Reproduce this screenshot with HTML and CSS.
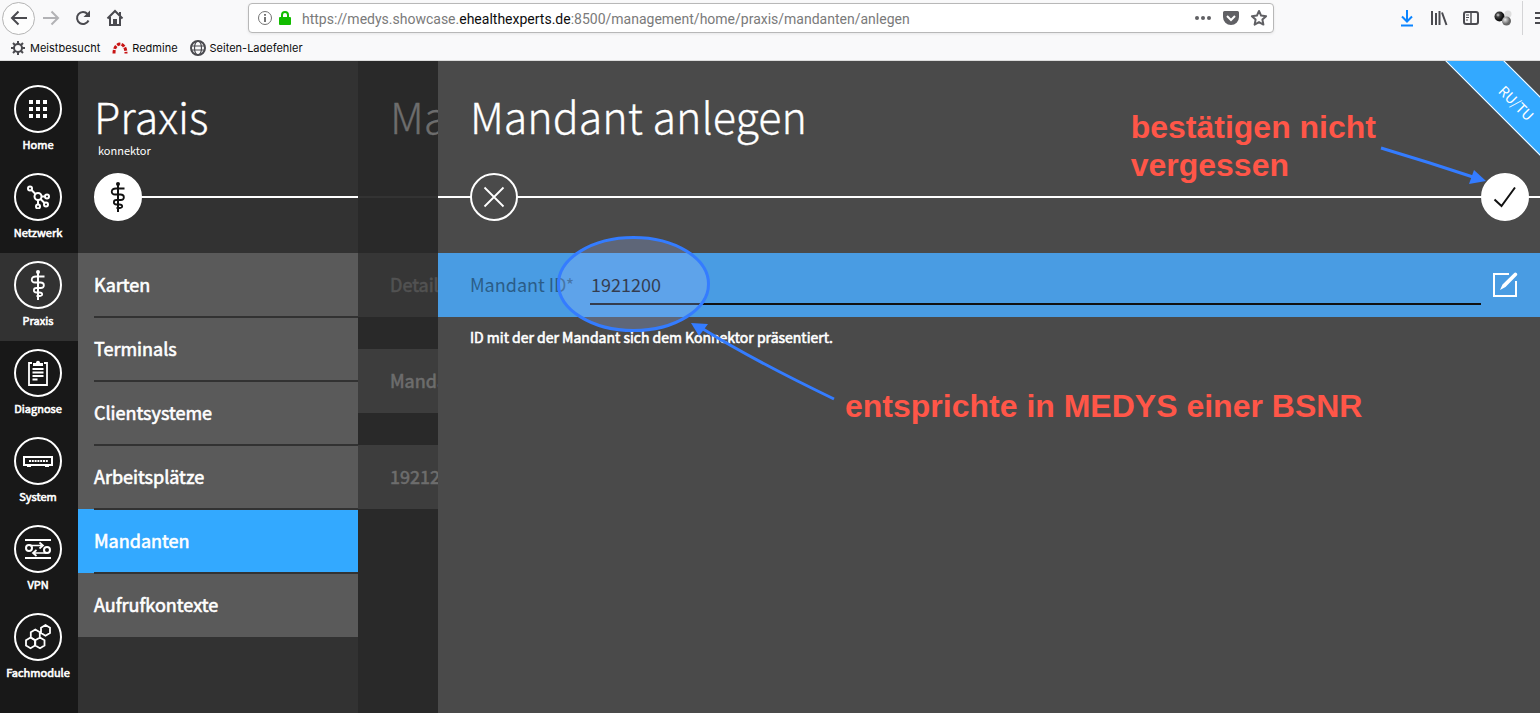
FILE: index.html
```html
<!DOCTYPE html>
<html lang="de">
<head>
<meta charset="utf-8">
<title>Mandant anlegen</title>
<link rel="stylesheet" href="styles.css">
</head>
<body>
<svg class="defs" aria-hidden="true">
  <symbol id="staff" viewBox="0 0 24 32">
    <circle cx="12" cy="3" r="2" fill="currentColor"/>
    <path d="M12 3V31" stroke="currentColor" stroke-width="2" fill="none"/>
    <path d="M18.500 7.500H10C4.500 7.500 4.500 13.500 9 13.500H14.500C19 13.500 19 19 14.500 19H10.500C7 19 7 23.500 10.500 23.500H13.500C17 23.500 17 27 14 27H10.500" stroke="currentColor" stroke-width="1.800" fill="none"/>
  </symbol>
</svg>

<header class="browser">
  <div class="toolbar">
    <button class="tool back" aria-label="Zurück"><svg width="18" height="18" viewBox="0 0 18 18"><path d="M17 9H2.500M8.500 2.500L2 9l6.500 6.500" /></svg></button>
    <button class="tool disabled" aria-label="Vor"><svg width="18" height="18" viewBox="0 0 18 18"><path d="M1 9h14.500M9.500 2.500L16 9l-6.500 6.500"/></svg></button>
    <button class="tool" aria-label="Neu laden"><svg width="18" height="18" viewBox="0 0 18 18"><path d="M14.500 11.500a6 6 0 1 1-1-6.500"/><path class="solid" d="M16 1.500V8H9.500z"/></svg></button>
    <button class="tool" aria-label="Startseite"><svg width="18" height="18" viewBox="0 0 18 18"><path d="M1.500 9.500L9 2l7.500 7.500M4 8v8h10V8"/><path class="solid" d="M7 10h4v6H7zM13 3h2v4h-2z"/></svg></button>
    <div class="address">
      <svg class="info" width="16" height="16" viewBox="0 0 16 16"><circle cx="8" cy="8" r="6.500"/><path class="bold" d="M8 7v5M8 4v1.800"/></svg>
      <svg class="lock" width="14" height="16" viewBox="0 0 14 16"><path d="M4 8V5a3 3 0 0 1 6 0v3" fill="none" stroke="#12bc00" stroke-width="2"/><rect x="1" y="7" width="12" height="8" rx="1" fill="#12bc00"/></svg>
      <span class="url">https://medys.showcase.<b>ehealthexperts.de</b>:8500/management/home/praxis/mandanten/anlegen</span>
      <button class="mini" aria-label="Seitenaktionen"><svg width="18" height="18" viewBox="0 0 18 18"><circle class="solid" cx="3" cy="9" r="2"/><circle class="solid" cx="9" cy="9" r="2"/><circle class="solid" cx="15" cy="9" r="2"/></svg></button>
      <button class="mini" aria-label="Pocket"><svg width="18" height="18" viewBox="0 0 18 18"><path class="solid" d="M2.500 2h13a1.500 1.500 0 0 1 1.500 1.500V8a8 8 0 0 1-16 0V3.500A1.500 1.500 0 0 1 2.500 2z"/><path class="tick" d="M5 7l4 4 4-4"/></svg></button>
      <button class="mini" aria-label="Lesezeichen"><svg width="18" height="18" viewBox="0 0 18 18"><path d="M9 2l2.100 4.600 5 .6-3.700 3.400 1 5L9 13.100l-4.400 2.500 1-5L1.900 7.200l5-.6z" stroke-linejoin="round"/></svg></button>
    </div>
    <div class="extras">
      <button class="tool download" aria-label="Downloads"><svg width="18" height="18" viewBox="0 0 18 18"><path d="M9 1v11M4 7.500L9 12.500l5-5M3 16.500h12"/></svg></button>
      <button class="tool" aria-label="Bibliothek"><svg width="18" height="18" viewBox="0 0 18 18"><path d="M2 2v14M6 4v12M9.500 2v14M12 3.500L16.500 16"/></svg></button>
      <button class="tool" aria-label="Seitenleisten"><svg width="18" height="18" viewBox="0 0 18 18"><rect x="2" y="3" width="14" height="12" rx="2"/><path d="M9 3v12" stroke-width="1.500"/><path d="M4 6h3M4 8.500h3M4 11h2" stroke-width="1"/></svg></button>
      <button class="tool" aria-label="Erweiterung"><svg width="18" height="18" viewBox="0 0 18 18"><defs><radialGradient id="dark" cx=".35" cy=".35"><stop offset="0" stop-color="#ddd"/><stop offset=".4" stop-color="#444"/><stop offset="1" stop-color="#111"/></radialGradient><radialGradient id="gray" cx=".35" cy=".35"><stop offset="0" stop-color="#eee"/><stop offset="1" stop-color="#666"/></radialGradient></defs><circle cx="14" cy="5" r="3.500" fill="#ddd" stroke="none"/><circle cx="5.500" cy="7.500" r="5" fill="url(#dark)" stroke="none"/><circle cx="12.500" cy="12" r="4.500" fill="url(#gray)" stroke="none"/></svg></button>
      <span class="divider"></span>
      <button class="tool menu" aria-label="Menü"><svg width="16" height="18" viewBox="0 0 16 18"><path d="M1 4h14M1 9h14M1 14h14"/></svg></button>
    </div>
  </div>
  <nav class="bookmarks" aria-label="Lesezeichen">
    <a href="#"><svg width="16" height="16" viewBox="0 0 16 16"><circle cx="8" cy="8" r="4"/><path d="M8 1v3M8 12v3M1 8h3M12 8h3M3 3l2.200 2.200M10.800 10.800L13 13M13 3l-2.200 2.200M5.200 10.800L3 13"/></svg>Meistbesucht</a>
    <a href="#"><svg class="redmine" width="16" height="16" viewBox="0 0 16 16"><path d="M2 13.500c0-12.500 12-12.500 12 0" stroke-dasharray="3.400 1.200"/></svg>Redmine</a>
    <a href="#"><svg width="16" height="16" viewBox="0 0 16 16"><circle cx="8" cy="8" r="7"/><path d="M1 6h14M1 10h14" stroke-width="1"/><ellipse cx="8" cy="8" rx="3.500" ry="7" stroke-width="1.200"/></svg>Seiten-Ladefehler</a>
  </nav>
</header>

<div class="app">
  <nav class="sidebar" aria-label="Hauptmenü">
    <a href="#"><span class="ring"><svg width="20" height="20" viewBox="0 0 20 20" fill="#fff"><path d="M1 1h4v4H1zM8 1h4v4H8zM15 1h4v4h-4zM1 8h4v4H1zM8 8h4v4H8zM15 8h4v4h-4zM1 15h4v4H1zM8 15h4v4H8zM15 15h4v4h-4z"/></svg></span>Home</a>
    <a href="#"><span class="ring"><svg width="24" height="24" viewBox="0 0 24 24" fill="none" stroke="#fff" stroke-width="2"><circle cx="12" cy="11.500" r="3.500"/><circle cx="4" cy="3.500" r="2"/><circle cx="21" cy="11.500" r="2"/><circle cx="20" cy="19.500" r="2"/><circle cx="12" cy="21.500" r="2"/><path d="M5.500 5l4 4M15.500 11.500H19M14.500 14l4 4M12 15v4.500"/></svg></span>Netzwerk</a>
    <a href="#" class="current"><span class="ring"><svg width="24" height="32"><use href="#staff"/></svg></span>Praxis</a>
    <a href="#"><span class="ring"><svg width="20" height="26" viewBox="0 0 20 26" fill="none" stroke="#fff" stroke-width="1.800"><path d="M4 3H1v22h18V3h-3"/><path d="M5 6V3h3c0-3 4-3 4 0h3v3z" fill="#fff" stroke="none"/><path d="M4.500 9h11M4.500 12.500h11M4.500 16h11M4.500 19.500h5"/></svg></span>Diagnose</a>
    <a href="#"><span class="ring"><svg width="30" height="12" viewBox="0 0 30 12" fill="none" stroke="#fff" stroke-width="2"><path d="M1 2h28v8H1z"/><path d="M6 6h19" stroke-dasharray="2 .8"/><path d="M4 11h4M22 11h4"/></svg></span>System</a>
    <a href="#"><span class="ring"><svg width="26" height="22" viewBox="0 0 26 22" fill="none" stroke="#fff" stroke-width="2"><path d="M0 2h26M0 20h26"/><circle cx="4" cy="10" r="3"/><circle cx="22" cy="12" r="3"/><path d="M5 7.500h12M14.500 4.500l3.500 3-3.500 3M21 15H9M11.500 12L8 15l3.500 3" stroke-width="1.700"/></svg></span>VPN</a>
    <a href="#"><span class="ring"><svg width="28" height="28" viewBox="0 0 28 28" fill="none" stroke="#fff" stroke-width="1.800"><path d="M6.500 14.500l4.500 2.700v5.300l-4.500 2.700L2 22.500v-5.300z"/><path d="M16 14.500l4.500 2.700v5.300L16 25.200l-4.700-2.700v-5.300zM11.300 6.500l4.500 2.700v5.300l-4.500 2.700-4.500-2.700V9.200zM21.500 2L26 4.700V10l-4.500 2.700L17 10V4.700z"/></svg></span>Fachmodule</a>
  </nav>

  <section class="panel praxis">
    <header class="head">
      <h1>Praxis</h1>
      <p>konnektor</p>
    </header>
    <div class="track"><span class="knob filled"><svg width="24" height="32"><use href="#staff"/></svg></span></div>
    <ul class="list">
      <li><a href="#">Karten</a></li>
      <li><a href="#">Terminals</a></li>
      <li><a href="#">Clientsysteme</a></li>
      <li><a href="#">Arbeitsplätze</a></li>
      <li><a href="#" class="current">Mandanten</a></li>
      <li><a href="#">Aufrufkontexte</a></li>
    </ul>
  </section>

  <section class="panel behind">
    <header class="head"><h1>Mandant</h1></header>
    <div class="track"></div>
    <div class="rows">
      <p class="caption">Details</p>
      <p>Mandant</p>
      <p>1921200</p>
    </div>
  </section>

  <main class="panel editor">
    <header class="head"><h1>Mandant anlegen</h1></header>
    <div class="ribbon-corner"><span class="ribbon">RU/TU</span></div>
    <div class="track">
      <button class="knob" aria-label="Abbrechen"><svg width="22" height="22" viewBox="0 0 22 22"><path d="M1.500 1.500l19 19M20.500 1.500l-19 19" stroke="#fff" stroke-width="1.800"/></svg></button>
      <button class="knob filled" aria-label="Bestätigen"><svg width="24" height="22" viewBox="0 0 24 22"><path d="M1.500 13.500L8.500 20 22 1.500" fill="none" stroke="#111" stroke-width="2"/></svg></button>
    </div>
    <form class="field">
      <label for="mandant">Mandant ID*</label>
      <input id="mandant" type="text" value="1921200">
      <button type="button" aria-label="Bearbeiten"><svg width="26" height="26" viewBox="0 0 26 26"><path d="M17 2H2v22h22V9" fill="none" stroke="#fff" stroke-width="2"/><path d="M8 18l2.500-5.500L22 1.200a1.500 1.500 0 0 1 2.800 2.300L13.500 15z" fill="#fff"/></svg></button>
    </form>
    <p class="help">ID mit der der Mandant sich dem Konnektor präsentiert.</p>

    <svg class="mark mark-field" width="400" height="170" viewBox="0 0 400 170" aria-hidden="true">
      <ellipse cx="85.500" cy="53" rx="75" ry="46.500" fill="rgba(154,185,255,.26)" stroke="#347cff" stroke-width="3"/>
      <path d="M155 98Q205 129 286 168" fill="none" stroke="#347cff" stroke-width="3"/>
      <path d="M143 92l17 1-9 12z" fill="#347cff"/>
    </svg>
    <svg class="mark mark-confirm" width="110" height="50" viewBox="0 0 110 50" aria-hidden="true">
      <path d="M1 8Q48 22 93 37" fill="none" stroke="#347cff" stroke-width="3"/>
      <path d="M106 41L94 30l-5 14z" fill="#347cff"/>
    </svg>
    <p class="note note-confirm">bestätigen nicht<br>vergessen</p>
    <p class="note note-field">entsprichte in MEDYS einer BSNR</p>
  </main>
</div>
</body>
</html>
```

FILE: styles.css
```css
* { box-sizing: border-box; }
body {
  margin: 0;
  min-height: 100vh;
  display: flex;
  flex-direction: column;
  overflow: hidden;
  font-family: "Noto Sans CJK SC", "Open Sans", sans-serif;
  color: #fff;
}
h1, p, ul { margin: 0; padding: 0; font-weight: inherit; }
ul { list-style: none; }
a { color: inherit; text-decoration: none; }
button { border: 0; padding: 0; background: none; font: inherit; display: grid; place-items: center; }
svg { flex: none; display: block; }
.defs { position: absolute; width: 0; height: 0; }

/* Browser bar */
.browser {
  background: #f9f9fa;
  border-bottom: 1px solid #dcdcdc;
  color: #0c0c0d;
  font-family: Inter, sans-serif;
}
.browser svg { fill: none; stroke: #4a4a4f; stroke-width: 2; }
.browser svg .solid { fill: #4a4a4f; stroke: none; }
.browser .redmine { stroke: #c81414; stroke-width: 3; }
.toolbar { display: flex; align-items: center; height: 36px; padding-left: 2px; }
.tool { width: 32px; height: 32px; flex: none; }
.tool.back { width: 33px; height: 33px; border: 1px solid #b4b4b4; border-radius: 50%; background: #fdfdfd; }
.tool.disabled { opacity: .4; }
.browser .download svg { stroke: #0a84ff; }
.address {
  flex: 1;
  display: flex;
  align-items: center;
  height: 30px;
  margin: 0 117px;
  padding: 0 0 0 8px;
  background: #fff;
  border: 1px solid #b8b8b8;
  border-radius: 4px;
  box-shadow: 0 1px 3px rgba(0, 0, 0, .08);
}
.browser .info { stroke: #737373; stroke-width: 1; }
.browser .info .bold { stroke-width: 2; }
.browser .lock { stroke: none; margin: 0 10px 0 5px; }
.url { flex: 1; padding-top: 2px; font: 14px/20px Roboto, sans-serif; color: #7a7a7a; white-space: nowrap; }
.url b { font-weight: 400; color: #0c0c0d; }
.mini { width: 28px; height: 28px; }
.browser .mini svg { stroke: #606064; }
.browser .mini .solid { fill: #606064; }
.browser .mini .tick { stroke: #fff; }
.extras { display: flex; align-items: center; width: 149px; }
.divider { flex: none; width: 1px; height: 34px; margin: 0 11px 0 3px; background: #d4d4d6; }
.tool.menu { width: 16px; }
.bookmarks { display: flex; gap: 12px; height: 24px; padding: 0 10px; font-size: 11px; line-height: 24px; }
.bookmarks a { display: flex; align-items: center; gap: 4px; }

/* Application */
.app { flex: 1; display: flex; background: #4a4a4a; }
.sidebar { flex: none; width: 78px; padding-top: 16px; background: #181818; }
.sidebar a {
  display: flex;
  flex-direction: column;
  align-items: center;
  height: 88px;
  padding: 8px 2px 0 0;
  gap: 3px;
  font-size: 11px;
  line-height: 16px;
}
.sidebar a, .list a, .rows p, .help { -webkit-text-stroke: .6px currentColor; }
.sidebar .current { background: #323232; }
.ring, .knob {
  display: grid;
  place-items: center;
  flex: none;
  width: 48px;
  height: 48px;
  border: 2px solid #fff;
  border-radius: 50%;
}

.panel { position: relative; flex: none; overflow: hidden; }
.head { height: 112px; padding: 29px 16px 0; }
.head h1 { font-size: 43px; line-height: 50px; font-weight: 300; white-space: nowrap; -webkit-text-stroke: .3px currentColor; }
.head p { padding: 2px 0 0 4px; font-size: 11px; line-height: 16px; }
.track {
  display: flex;
  justify-content: space-between;
  height: 48px;
  margin-bottom: 32px;
  padding: 0 16px;
  background: linear-gradient(#fff, #fff) 0 23px / 100% 2px no-repeat;
}
.knob { background: #4a4a4a; }
.knob.filled { background: #fff; color: #111; }

.praxis { width: 280px; background: #323232; }
.praxis .track { background-position-x: 16px; }
.list li { position: relative; }
.list li + li::before {
  content: "";
  position: absolute;
  top: -1px;
  left: 16px;
  right: 0;
  height: 2px;
  background: #323232;
}
.list a { display: block; padding: 0 16px 2px; font-size: 18px; line-height: 62px; background: #5a5a5a; }
.list .current { background: #33a9ff; }

.behind { width: 80px; background: #292929; color: #6d6d6d; }
.behind .head, .behind .rows p { padding-left: 32px; }
.behind .track { background-image: linear-gradient(#333, #333); }
.rows { display: grid; gap: 32px; }
.rows p { padding-bottom: 2px; background: #3d3d3d; font-size: 18px; line-height: 62px; }
.rows .caption { background: #363636; color: #525252; }

.editor { flex: 1; background: #4a4a4a; }
.editor .head { padding-left: 32px; }
.editor .track { padding: 0 11px 0 32px; }
.field {
  display: flex;
  align-items: center;
  height: 64px;
  padding: 0 22px 0 32px;
  background: #499ce3;
  font-size: 18px;
}
.field label { flex: none; width: 120px; padding-bottom: 2px; color: #2b5d88; }
.field input {
  flex: 1;
  min-width: 0;
  height: 40px;
  padding: 0 1px;
  border: 0;
  border-bottom: 2px solid #111;
  border-radius: 0;
  background: none;
  color: #111;
  font: inherit;
}
.field button { margin-left: 11px; }
.help { padding: 9px 32px; font-size: 14px; line-height: 22px; }

.ribbon-corner { position: absolute; top: 0; right: 0; width: 110px; height: 110px; overflow: hidden; }
.ribbon {
  position: absolute;
  top: 20px;
  right: -76px;
  width: 200px;
  padding-left: 2px;
  border: 1px solid #fff;
  background: #33a9ff;
  font-size: 14px;
  line-height: 40px;
  text-align: center;
  transform: rotate(45deg);
}

/* Annotations drawn over the page */
.mark, .note { position: absolute; pointer-events: none; }
.mark-field { left: 110px; top: 170px; }
.mark-confirm { right: 50px; top: 79px; }
.note { font: 700 32px/38px "Liberation Sans", Arial, sans-serif; color: #ff5648; white-space: nowrap; }
.note-confirm { right: 164px; top: 47px; }
.note-field { left: 407px; top: 326px; }
```
